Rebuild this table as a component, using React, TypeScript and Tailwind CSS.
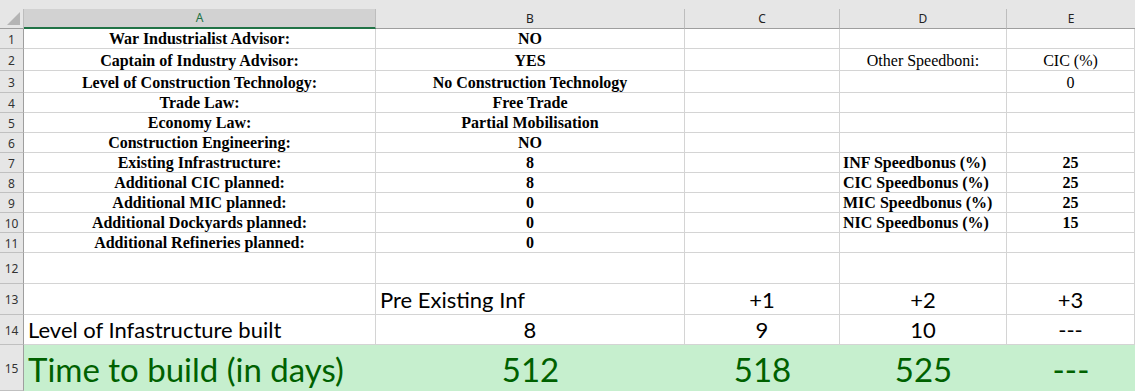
import React from "react";

const serif = "font-['Liberation_Serif',serif]";
const sans = "font-['Lato',sans-serif]";

type Cell = { t?: React.ReactNode; a?: "l" | "c" | "r"; cls?: string };

const widths = ["w-[352px]", "w-[309px]", "w-[155px]", "w-[167px]", "flex-1"];

function Row({
  n,
  h,
  cells,
  good,
  rowCls,
}: {
  n: number;
  h: string;
  cells: Cell[];
  good?: boolean;
  rowCls?: string;
}) {
  return (
    <div className={`flex ${h}`}>
      <div className="w-[24px] shrink-0 bg-[#e6e6e6] border-r border-b border-r-[#9e9e9e] border-b-[#c0c0c0] flex items-center justify-center pt-[2px] text-[12px] text-[#333] font-['Noto_Sans',sans-serif]">
        {n}
      </div>
      {cells.map((c, i) => (
        <div
          key={i}
          className={`${widths[i]} shrink-0 flex items-end overflow-visible whitespace-nowrap ${
            good ? "bg-[#c6efce]" : "border-r border-b border-[#d4d4d4]"
          } ${c.a === "l" ? "justify-start pl-[3px]" : c.a === "r" ? "justify-end pr-[3px]" : "justify-center"} ${rowCls ?? ""} ${c.cls ?? ""}`}
        >
          {c.t}
        </div>
      ))}
    </div>
  );
}

const b = (t: React.ReactNode, a: "l" | "c" = "c"): Cell => ({ t, a, cls: "font-bold" });
const e: Cell = {};

export default function App() {
  const top = `${serif} text-[16px] leading-[18px] text-black pb-0`;
  const mid = `${sans} text-[22px] leading-[24px] text-black pb-[2px]`;
  return (
    <div className="w-[1135px] h-[391px] overflow-hidden bg-white">
      {/* column header */}
      <div className="h-[29px] bg-[#e6e6e6] flex flex-col">
        <div className="h-[9px]" />
        <div className="flex h-[20px] font-['Noto_Sans',sans-serif] text-[12px] text-[#222]">
          <div className="w-[24px] shrink-0 border-r border-b border-r-[#bdbdbd] border-b-[#9e9e9e] relative">
            <div className="absolute right-[3px] bottom-[3px] w-0 h-0 border-l-[13px] border-l-transparent border-b-[13px] border-b-[#b4b4b4]" />
          </div>
          <div className="w-[352px] shrink-0 bg-[#d2d2d2] border-r border-r-[#bdbdbd] border-b-2 border-b-[#217346] flex items-center justify-center text-[#217346]">
            A
          </div>
          <div className="w-[309px] shrink-0 border-r border-b border-r-[#bdbdbd] border-b-[#9e9e9e] flex items-center justify-center">B</div>
          <div className="w-[155px] shrink-0 border-r border-b border-r-[#bdbdbd] border-b-[#9e9e9e] flex items-center justify-center">C</div>
          <div className="w-[167px] shrink-0 border-r border-b border-r-[#bdbdbd] border-b-[#9e9e9e] flex items-center justify-center">D</div>
          <div className="flex-1 border-b border-b-[#9e9e9e] flex items-center justify-center">E</div>
        </div>
      </div>

      <Row n={1} h="h-[20px]" rowCls={top} cells={[b("War Industrialist Advisor:"), b("NO"), e, e, e]} />
      <Row n={2} h="h-[22px]" rowCls={top} cells={[b("Captain of Industry Advisor:"), b("YES"), e, { t: "Other Speedboni:" }, { t: "CIC (%)" }]} />
      <Row n={3} h="h-[22px]" rowCls={top} cells={[b("Level of Construction Technology:"), b("No Construction Technology"), e, e, { t: "0" }]} />
      <Row n={4} h="h-[20px]" rowCls={top} cells={[b("Trade Law:"), b("Free Trade"), e, e, e]} />
      <Row n={5} h="h-[20px]" rowCls={top} cells={[b("Economy Law:"), b("Partial Mobilisation"), e, e, e]} />
      <Row n={6} h="h-[20px]" rowCls={top} cells={[b("Construction Engineering:"), b("NO"), e, e, e]} />
      <Row n={7} h="h-[20px]" rowCls={top} cells={[b("Existing Infrastructure:"), b("8"), e, b("INF Speedbonus (%)", "l"), b("25")]} />
      <Row n={8} h="h-[20px]" rowCls={top} cells={[b("Additional CIC planned:"), b("8"), e, b("CIC Speedbonus (%)", "l"), b("25")]} />
      <Row n={9} h="h-[20px]" rowCls={top} cells={[b("Additional MIC planned:"), b("0"), e, b("MIC Speedbonus (%)", "l"), b("25")]} />
      <Row n={10} h="h-[20px]" rowCls={top} cells={[b("Additional Dockyards planned:"), b("0"), e, b("NIC Speedbonus (%)", "l"), b("15")]} />
      <Row n={11} h="h-[20px]" rowCls={top} cells={[b("Additional Refineries planned:"), b("0"), e, e, e]} />
      <Row n={12} h="h-[31px]" cells={[e, e, e, e, e]} />
      <Row
        n={13}
        h="h-[31px]"
        rowCls={mid}
        cells={[e, { t: "Pre Existing Inf", a: "l", cls: "pl-[4px]" }, { t: "+1" }, { t: "+2" }, { t: "+3" }]}
      />
      <Row
        n={14}
        h="h-[30px]"
        rowCls={mid}
        cells={[{ t: "Level of Infastructure built", a: "l", cls: "pl-[4px]" }, { t: "8" }, { t: "9" }, { t: "10" }, { t: "---" }]}
      />
      <Row
        n={15}
        h="h-[46px]"
        good
        rowCls={`${sans} text-[33px] leading-[38px] text-[#006100] pb-[3px]`}
        cells={[{ t: "Time to build (in days)", a: "l", cls: "pl-[4px]" }, { t: "512" }, { t: "518" }, { t: "525" }, { t: "---" }]}
      />
    </div>
  );
}
